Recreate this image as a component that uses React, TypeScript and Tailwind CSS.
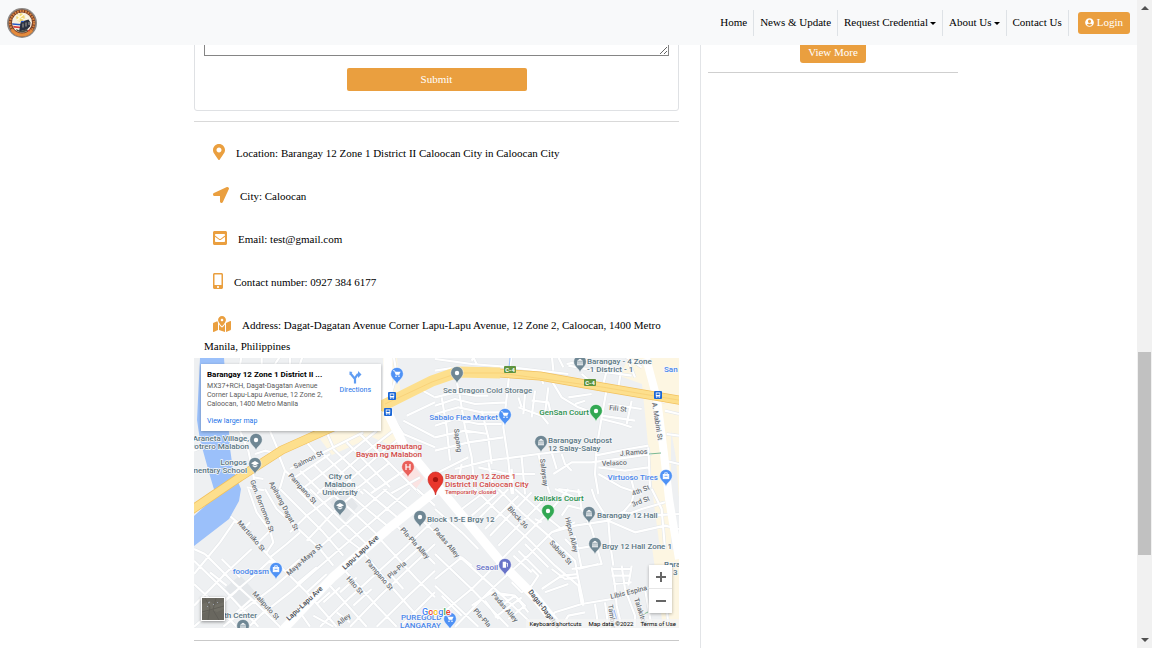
import type { ReactNode } from "react";
import {
  FaEnvelopeSquare,
  FaLocationArrow,
  FaMapMarkedAlt,
  FaMapMarkerAlt,
  FaMobileAlt,
  FaUserCircle,
} from "react-icons/fa";

const serif = "font-['Liberation_Serif',serif]";
const roboto = "font-[Roboto,sans-serif]";

function Seal() {
  return (
    <svg viewBox="0 0 30 30" className="h-[30px] w-[30px]" role="img" aria-label="Barangay seal">
      <circle cx="15" cy="15" r="15" fill="#8d8884" />
      <circle cx="15" cy="15" r="13.4" fill="#7a3f26" />
      <circle cx="15" cy="15" r="12" fill="none" stroke="#d9853f" strokeWidth="2.2" strokeDasharray="1.6 1.1" />
      <path d="M5 22a12.5 12.5 0 0 0 20 0" fill="none" stroke="#e58b3c" strokeWidth="3" />
      <circle cx="15" cy="14.6" r="10" fill="#f7f1e2" />
      <circle cx="13.500" cy="9.5" r="4.2" fill="#f3d873" />
      <path d="M12 5v8M9 7l9 5M17 6l-7 6M19 8l2 3" stroke="#fffbe6" strokeWidth="1.2" />
      <path d="M5.2 15.2l9 .8v1.500L5.600 16.700z" fill="#2456c6" />
      <path d="M6 17.700l8 1v1.500L6.800 19.700z" fill="#d83c3c" />
      <path d="M13.500 14.500l3-1.500 5-1.500 2 3-.5 4-3 3-8 2 1-5z" fill="#2a3140" />
      <path d="M9 21l5 2 6-2 1 2-6 1.600-5-1.400z" fill="#4b4d42" />
      <path d="M14 13.500h3" stroke="#2f5fd0" strokeWidth="1.200" />
      <path d="M16 15.500v4M19 14.500v4M22 14v3" stroke="#c9c3b2" strokeWidth=".8" />
      <path d="M20 22.500l3.500-1.500-1 2.500z" fill="#d8402e" />
    </svg>
  );
}

function Caret() {
  return <span className="ml-0.5 inline-block border-x-[3px] border-t-[3px] border-x-transparent border-t-black align-middle" />;
}

function NavItem({ children, menu = false }: { children: ReactNode; menu?: boolean }) {
  return (
    <li className="flex h-[26px] items-center border-r border-[#dee2e6] px-1.5">
      <a href="#" className="whitespace-nowrap">
        {children}
        {menu && <Caret />}
      </a>
    </li>
  );
}

function Detail({ icon, children }: { icon: ReactNode; children: ReactNode }) {
  return (
    <p className="px-2.5 leading-[21px]">
      <span className="mr-[11px] ml-[9px] inline-block align-middle text-[#ea9f3f]">{icon}</span>
      {children}
    </p>
  );
}

/* Street geometry, one group for each quarter of the map, at three units to the pixel. */
const northWest = [
  "M155 0L150 35M215 0V30M275 0L255 30M300 0V30M340 0L330 30",
  "M12 290L60 270M150 231L175 290L190 360L195 420M195 300L225 290L265 300M240 231L265 290",
  "M265 300L285 350L330 390L370 420M285 350L265 420M300 345L410 290L520 235",
  "M330 350L400 420M370 330L460 420M400 300L520 420M430 285L560 410M470 265L600 400M510 240L640 370L690 420",
  "M300 380L420 300M330 410L460 310L560 230M380 420L520 300L610 230M430 420L570 300L620 260M480 420L600 325M540 420L650 345M600 420L690 370",
  "M610 0L620 60L600 130M650 185L735 145M600 180L640 240L735 280M640 200L735 250M680 100L735 130",
  "M190 370L220 375M170 400L230 410M410 235L430 280M350 265L380 300",
];
const northEast = [
  "M0 15L110 30L230 40L400 60M230 0L225 40L215 130L205 220L220 320L230 420M110 0L125 30",
  "M350 0L355 50M365 0L385 40M395 30L420 25M400 35L480 50L590 65M440 60L480 95M520 30L505 90M580 20L600 70M460 0L455 30M560 40L550 100",
  "M60 60L75 130L90 220L110 310L120 420M0 155L60 135L120 150L215 145M0 180L70 160L140 175L200 175",
  "M0 130L60 115L120 125L160 125M0 215L60 195L130 210L200 210M0 250L90 230L160 240M0 290L100 265L205 250",
  "M20 130L35 220L45 320M140 170L160 250L170 330M250 130L260 160M270 120L265 180M300 110L290 190M340 100L330 180",
  "M350 80L380 130L430 160L500 185L600 200M320 75L325 90M400 130L470 120M420 150L450 140M515 105L500 190L485 280L480 360L490 420",
  "M290 140L340 145L350 190M250 160L320 185L340 210M60 345L160 320L310 300L480 280M100 310L0 360M310 300L325 360L345 420",
  "M355 360L410 325L470 325L580 310L650 300M480 305L580 285L640 275M490 340L570 350L640 340M490 360L560 400L620 420",
  "M380 300L390 330L410 350M350 295L365 345M130 340L220 360L300 360M80 330L70 380M160 325L180 420M230 345L235 420M260 310L270 420",
  "M520 150L620 165M500 195L560 210L590 220M590 140L575 210M690 170L732 180M695 240L732 245M585 360L600 420M640 280L645 400M690 320L732 330",
  "M120 0L110 20M0 50L50 42M610 120L690 145M560 0L620 40",
];
const southWest = [
  "M95 60L160 115L240 205L300 260L350 310L440 413M12 255L90 160L135 95M45 195L130 280L185 330L270 413",
  "M12 215L110 310L205 413M12 285L60 330L140 413M12 180L45 195M12 350L110 250L185 180M12 413L180 270L240 215L270 230",
  "M100 413L170 355L250 295L400 165L490 85L590 0M210 380L300 310L380 240L520 120L660 0M160 120L180 100",
  "M175 0L200 70L240 125L250 160L230 190M225 0L260 60L320 115L390 180L430 230M270 0L330 60L400 130L460 200",
  "M320 0L400 80L470 150L510 180M360 0L430 70L540 175M410 0L480 60L570 145M460 0L530 60L610 125M520 0L580 50L640 100M580 0L680 80",
  "M240 205L290 165L330 130M200 165L240 125M285 250L330 210M320 285L380 235M350 310L410 255M380 345L420 310",
  "M300 130L350 80L430 20M350 155L440 60L510 0M110 290L60 250M150 265L95 210M140 305L90 350M185 330L140 370M220 370L180 410",
  "M520 190L610 300L710 413M460 240L560 350L620 413M420 290L530 413M570 150L680 270L735 325M620 110L700 190L735 225M660 60L735 130",
  "M390 413L480 325L640 180L735 90M480 413L570 320L735 165M560 413L650 325L735 245M630 413L735 310M400 340L450 295M370 380L430 413",
  "M450 310L500 265M490 350L545 300M680 0L735 50M440 370L480 400M640 220L690 175M600 255L640 300M330 370L360 413",
];
const southEast = [
  "M0 130L60 190L170 290L300 413M0 195L110 300L220 413M0 290L130 413M0 60L80 130L130 180",
  "M0 390L110 300L210 200L350 60L400 0M60 413L170 300L280 200L350 130L420 100M0 270L80 205L110 230",
  "M120 0L180 60L280 150L360 230L430 290L445 350M190 0L260 70L340 140L420 215L430 270L445 340M240 0L330 80L380 120",
  "M130 90L220 0M150 120L250 20M165 140L290 10M190 170L330 30M60 20L90 0M80 60L160 0M110 80L190 10M235 200L290 250M250 185L320 255M270 165L340 235",
  "M110 350L170 310L240 320L280 370M200 350L240 320L270 350L220 390M180 385L260 325M20 320L80 380M150 335L190 390M230 280L260 310L290 290L310 260L290 240",
  "M320 300L380 260L430 255M330 310L400 285M350 240L390 270L430 265M410 240L500 225L490 190L470 120L440 60L430 0M430 240L490 225",
  "M350 130L420 110L520 95L600 130L690 110L732 120M520 95L480 30L470 0M520 95L560 70L640 80L732 75M540 90L620 60L690 40",
  "M320 413L360 370L440 345L530 330L650 295M530 235L540 290L545 350L560 413M560 230L570 300L600 380L600 413M590 230L580 290M530 240H590M530 260H585M535 285L590 280",
  "M520 95L525 160L535 230M600 0L590 40L560 75M650 0L680 60L690 180M360 0L430 30M370 0L440 10M420 180L480 170M420 140L440 240M390 150L410 170M440 345L430 290",
  "M380 413L400 380L450 370M480 345L490 413M510 340L520 413M630 300L650 413M690 290L700 413M300 90L320 100M380 80L400 50L440 60",
];

type Pt = { x: number; y: number; color: string; glyph?: string };
const pins: Pt[] = [
  { x: 397, y: 375, color: "#4f92f5", glyph: "cart" },
  { x: 457, y: 374, color: "#6f8794" },
  { x: 505, y: 416, color: "#4f92f5", glyph: "cart" },
  { x: 596, y: 412, color: "#32a853" },
  { x: 580, y: 363, color: "#6f8794", glyph: "hall" },
  { x: 541, y: 443, color: "#6f8794", glyph: "hall" },
  { x: 666, y: 477, color: "#4f92f5", glyph: "bag" },
  { x: 256, y: 441, color: "#6f8794" },
  { x: 255, y: 465, color: "#6f8794", glyph: "cap" },
  { x: 340, y: 507, color: "#6f8794", glyph: "cap" },
  { x: 408, y: 468, color: "#e9605a", glyph: "H" },
  { x: 420, y: 518, color: "#6f8794" },
  { x: 548, y: 512, color: "#32a853" },
  { x: 589, y: 514, color: "#6f8794", glyph: "hall" },
  { x: 595, y: 545, color: "#6f8794", glyph: "hall" },
  { x: 505, y: 566, color: "#6873c8", glyph: "fuel" },
  { x: 276, y: 570, color: "#4f92f5", glyph: "bag" },
  { x: 450, y: 620, color: "#4f92f5", glyph: "cart" },
  { x: 243, y: 627, color: "#6f8794", glyph: "hall" },
];

function Pin({ x, y, color, glyph }: Pt) {
  return (
    <g transform={`translate(${x} ${y})`}>
      <path d="M0 10.5C-.8 6.5-6.3 4.5-6.3-.3a6.3 6.3 0 0 1 12.6 0C6.3 4.5.8 6.5 0 10.5z" fill={color} stroke="#fff" strokeWidth=".5" />
      {!glyph && <circle r="2.2" fill="#fff" />}
      {glyph === "cart" && (
        <g fill="#fff">
          <path d="M-4-3.300h1.500l1.700 4H2.300" fill="none" stroke="#fff" strokeWidth=".8" />
          <path d="M-2.200-2.300H3.600L2.300.400h-3.400z" />
          <circle cx="-1" cy="2.3" r=".8" />
          <circle cx="2" cy="2.3" r=".8" />
        </g>
      )}
      {glyph === "hall" && <path d="M-3-1.3L0-3.3l3 2zM-2.6-.7h1.2V2h-1.2zM-.6-.7H.6V2H-.6zM1.4-.7h1.2V2H1.4zM-3 2.3h6v.9h-6z" fill="#fff" />}
      {glyph === "cap" && <path d="M-4-.8L0-3l4 2.2L0 1.4zM-2.3 1L0 2.2 2.3 1v1.3L0 3.4-2.3 2.3z" fill="#fff" />}
      {glyph === "bag" && (
        <g fill="none" stroke="#fff" strokeWidth=".8">
          <rect x="-2.8" y="-1.6" width="5.6" height="4.3" fill="#fff" />
          <path d="M-1.3-1.6v-1.6h2.6v1.6" />
          <path d="M-1.5.3h3" stroke={color} />
        </g>
      )}
      {glyph === "fuel" && <path d="M-2.3-3.2h3.4v6h-3.4zM1.8-2.4l1.2 1v3.2H2.2v-2.6l-.8-.6z" fill="#fff" />}
      {glyph === "H" && <path d="M-2-3v6M2-3v6M-2 0h4" stroke="#fff" strokeWidth="1.2" />}
    </g>
  );
}

type Label = { x: number; y: number; t: string; c?: string; a?: "start" | "middle" | "end"; r?: number; s?: number };
const slate = "#5a7683";
const blue = "#4a86ea";
const street = "#6a6f74";
const red = "#d24a47";
const green = "#2c9150";
const labels: Label[] = [
  { x: 587, y: 365, t: "Barangay - 4 Zone", c: slate },
  { x: 587, y: 373, t: "-1 District - 1", c: slate },
  { x: 664, y: 373, t: "San", c: blue },
  { x: 443, y: 394, t: "Sea Dragon Cold Storage", c: "#667d88" },
  { x: 498, y: 421, t: "Sabalo Flea Market", c: blue, a: "end" },
  { x: 589, y: 416, t: "GenSan Court", c: green, a: "end" },
  { x: 548, y: 444, t: "Barangay Outpost", c: slate },
  { x: 548, y: 452, t: "12 Salay-Salay", c: slate },
  { x: 658, y: 481, t: "Virtuoso Tires", c: blue, a: "end" },
  { x: 249, y: 442, t: "Araneta Village,", c: slate, a: "end" },
  { x: 249, y: 450, t: "Potrero Malabon", c: slate, a: "end" },
  { x: 247, y: 466, t: "Longos", c: slate, a: "end" },
  { x: 247, y: 474, t: "Elementary School", c: slate, a: "end" },
  { x: 422, y: 450, t: "Pagamutang", c: red, a: "end" },
  { x: 422, y: 458, t: "Bayan ng Malabon", c: red, a: "end" },
  { x: 340, y: 480, t: "City of", c: slate, a: "middle" },
  { x: 340, y: 488, t: "Malabon", c: slate, a: "middle" },
  { x: 340, y: 496, t: "University", c: slate, a: "middle" },
  { x: 445, y: 480, t: "Barangay 12 Zone 1", c: red },
  { x: 445, y: 488, t: "District II Caloocan City", c: red },
  { x: 445, y: 495, t: "Temporarily closed", c: red, s: 6 },
  { x: 427, y: 523, t: "Block 15-E Brgy 12", c: slate },
  { x: 534, y: 502, t: "Kaliskis Court", c: green },
  { x: 597, y: 519, t: "Barangay 12 Hall", c: slate },
  { x: 602, y: 550, t: "Brgy 12 Hall Zone 1", c: slate },
  { x: 664, y: 568, t: "Bara", c: slate },
  { x: 673, y: 576, t: "3", c: slate },
  { x: 498, y: 571, t: "Seaoil", c: "#6873c8", a: "end" },
  { x: 269, y: 575, t: "foodgasm", c: blue, a: "end" },
  { x: 257, y: 619, t: "Health Center", c: slate, a: "end" },
  { x: 401, y: 621, t: "PUREGOLD", c: blue },
  { x: 400, y: 629, t: "LANGARAY", c: blue },
  { x: 609, y: 411, t: "Fili St", r: 6, s: 7 },
  { x: 620, y: 457, t: "J.Ramos", r: -5, s: 7 },
  { x: 602, y: 467, t: "Velasco", r: -3, s: 7 },
  { x: 652, y: 404, t: "A. Mabini St", r: 81, s: 7 },
  { x: 454, y: 430, t: "Sapang", r: 82, s: 7 },
  { x: 540, y: 460, t: "Salaysay", r: 83, s: 7 },
  { x: 295, y: 470, t: "Salmon St", r: -27, s: 7 },
  { x: 288, y: 477, t: "Pampano St", r: 48, s: 7 },
  { x: 269, y: 484, t: "Apihang Dagat St", r: 62, s: 7 },
  { x: 250, y: 482, t: "Gen. Borromeo St", r: 69, s: 7 },
  { x: 237, y: 524, t: "Martiniko St", r: 49, s: 7 },
  { x: 289, y: 577, t: "Maya-Maya St", r: -41, s: 7 },
  { x: 252, y: 595, t: "Maliputo St", r: 47, s: 7 },
  { x: 345, y: 571, t: "Lapu-Lapu Ave", r: -43, s: 7, c: "#3f464b" },
  { x: 289, y: 622, t: "Lapu-Lapu Ave", r: -43, s: 7, c: "#3f464b" },
  { x: 365, y: 563, t: "Pampano St", r: 49, s: 7 },
  { x: 346, y: 580, t: "Hito St", r: 48, s: 7 },
  { x: 390, y: 580, t: "Pla-Pla", r: -41, s: 7 },
  { x: 400, y: 531, t: "Pla-Pla Alley", r: 48, s: 7 },
  { x: 339, y: 627, t: "Alley", r: -38, s: 7 },
  { x: 433, y: 531, t: "Padas Alley", r: 50, s: 7 },
  { x: 507, y: 510, t: "Block 36", r: 48, s: 7 },
  { x: 565, y: 519, t: "Hipon Alley", r: 76, s: 7 },
  { x: 549, y: 544, t: "Sabalo St", r: 48, s: 7 },
  { x: 491, y: 596, t: "Padas Alley", r: 49, s: 7 },
  { x: 473, y: 612, t: "Pla-Pla", r: 48, s: 7 },
  { x: 528, y: 593, t: "Dagat-Dagatan", r: 52, s: 7, c: "#3f464b" },
  { x: 633, y: 497, t: "4th St", r: -22, s: 7 },
  { x: 633, y: 508, t: "3rd St", r: -22, s: 7 },
  { x: 611, y: 600, t: "Libis Espina", r: -14, s: 7 },
  { x: 608, y: 606, t: "Tamban", r: 82, s: 7 },
  { x: 634, y: 600, t: "Talakitok", r: 72, s: 7 },
];

function Streets({ d, at }: { d: string[]; at: string }) {
  return (
    <g transform={at} fill="none" strokeLinejoin="round">
      <path d={d.join("")} stroke="#e3e6e9" strokeWidth="9.5" />
      <path d={d.join("")} stroke="#fff" strokeWidth="6.5" />
    </g>
  );
}

function Bus({ x, y }: { x: number; y: number }) {
  return (
    <g transform={`translate(${x} ${y})`}>
      <rect x="-4" y="-4" width="8" height="8" rx="1" fill="#1a66d6" />
      <path d="M-2.2-2.4h4.4v4h-4.4zM-1.8 1.8h1.1v1h-1.1zM.7 1.8h1.1v1H.7z" fill="#fff" />
      <path d="M-1.5-1.6h3V0h-3z" fill="#1a66d6" />
    </g>
  );
}

function Shield({ x, y }: { x: number; y: number }) {
  return (
    <g>
      <rect x={x - 6} y={y - 3} width="12" height="7" rx="1" fill="#5f9440" />
      <text x={x} y={y + 3} textAnchor="middle" fontSize="6" fontWeight="700" fill="#fff">C-4</text>
    </g>
  );
}

function MapDrawing() {
  return (
    <svg
      viewBox="194 359 485 270"
      preserveAspectRatio="xMidYMid slice"
      className={`block h-full w-full ${roboto}`}
      role="img"
      aria-label="Map of Barangay 12 Zone 1 District II Caloocan City"
    >
      <rect x="194" y="359" width="485" height="270" fill="#eef0f2" />
      <path d="M628 359h30l18 100 3 40v-140M628 359l-8 18 22 8 12 120 8 60 9 2v-210z" fill="#fdf6e2" />
      <path d="M320 440l66-30 18 24-10 14-22-10-40 18zM383 359h14l4 40-16 10zM652 548l27 4v76h-16z" fill="#fdf6e2" />
      <path d="M330 503l14-14 14 18-13 16zM224 590l16-14 18 20-16 16z" fill="#e4e7ea" />
      <path d="M400 474l10-11 14 16-9 12z" fill="#fbe3e2" />
      <Streets d={northWest} at="translate(190 355) scale(.33333)" />
      <Streets d={northEast} at="translate(435 355) scale(.33333)" />
      <Streets d={southWest} at="translate(190 490) scale(.33333)" />
      <Streets d={southEast} at="translate(435 490) scale(.33333)" />
      <path d="M200 359h24l4 60 2 30 3 22 8 19-2 12-10 18-35 27v-30l22-20-6-20-10-36-3-20z" fill="#9bc0fa" />
      <g fill="none" stroke="#fff">
        <path d="M646 359L657 400L664 455L669 500L679 560" strokeWidth="8" />
        <path d="M388 359L387 412L403 445L436 485L505 568L535 598L562 632" strokeWidth="9" />
        <path d="M280 634L333 578L388 530L438 490" strokeWidth="9" />
      </g>
      <g fill="none" strokeLinejoin="round">
        <path d="M190 512L240 478L282 451L340 425L388 404L432 382L458 373L485 373L540 377L602 388L684 402" stroke="#f2c15e" strokeWidth="9" />
        <path d="M190 512L240 478L282 451L340 425L388 404L432 382L458 373L485 373L540 377L602 388L684 402" stroke="#fddf8d" strokeWidth="7.5" />
        <path d="M380 408L432 382L458 373L500 374" stroke="#fddf8d" strokeWidth="11" />
        <path d="M385 405L432 383L458 374L500 374L602 388L684 402" stroke="#f7cd71" strokeWidth=".7" />
      </g>
      <path d="M510 359l-1 10M614 611l-2 9M614 611l3 10" stroke="#9bc0fa" strokeWidth="1" />
      <path d="M649 455l12-1M640 617l8-4" stroke="#79b893" strokeWidth="1" />
      <Shield x={510} y={370} />
      <Shield x={590} y={383} />
      <Bus x={392} y={397} />
      <Bus x={388} y={413} />
      <Bus x={658} y={396} />
      {labels.map((l) => (
        <text
          key={`${l.t}${l.x}`}
          transform={`translate(${l.x} ${l.y}) rotate(${l.r ?? 0})`}
          textAnchor={l.a ?? "start"}
          fontSize={l.s ?? 8}
          fontWeight="500"
          fill={l.c ?? street}
          stroke="#f7f8f9"
          strokeWidth="1.4"
          paintOrder="stroke"
        >
          {l.t}
        </text>
      ))}
      {pins.map((p) => (
        <Pin key={`${p.x}-${p.y}`} {...p} />
      ))}
      <path d="M435.500 496C434.500 489 428 486.500 428 480.500a7.500 7.500 0 0 1 15 0C443 486.500 436.500 489 435.500 496z" fill="#e8372c" stroke="#c5221f" strokeWidth=".6" />
      <circle cx="435.500" cy="480.500" r="2.600" fill="#a5150f" />
      <text x="422" y="616" fontSize="9" fontWeight="500" stroke="#fff" strokeWidth="1.5" paintOrder="stroke">
        <tspan fill="#4285f4">G</tspan>
        <tspan fill="#ea4335">o</tspan>
        <tspan fill="#fbbc05">o</tspan>
        <tspan fill="#4285f4">g</tspan>
        <tspan fill="#34a853">l</tspan>
        <tspan fill="#ea4335">e</tspan>
      </text>
    </svg>
  );
}

function MapPanel() {
  return (
    <section aria-label="Map" className={`relative h-[270px] overflow-hidden ${roboto}`}>
      <MapDrawing />
      <div className="absolute top-[6px] left-[7px] flex w-[180px] justify-between bg-white pt-1.5 pr-2.5 pb-[5px] pl-1.5 shadow-[0_1px_3px_rgba(0,0,0,0.3)]">
        <div className="text-[7px] leading-[9px] whitespace-nowrap text-[#5b5b5b]">
          <h2 className="mb-0.5 text-[8px] leading-[10px] font-bold text-black">Barangay 12 Zone 1 District II ...</h2>
          <p>
            MX37+RCH, Dagat-Dagatan Avenue
            <br />
            Corner Lapu-Lapu Avenue, 12 Zone 2,
            <br />
            Caloocan, 1400 Metro Manila
          </p>
          <a href="#" className="mt-2 block text-[#1a73e8]">View larger map</a>
        </div>
        <a href="#" className="flex flex-col items-center text-[7px] leading-[9px] text-[#1a73e8]">
          <svg viewBox="0 0 14 14" className="mb-0.5 h-[14px] w-[14px]" aria-hidden="true">
            <path d="M7 13.500V9L2.500 3.500M7 10V8l2.500-3.500H11" fill="none" stroke="#5f9cf2" strokeWidth="2.200" />
            <path d="M10 1l3.500 3.500L10 8z" fill="#5f9cf2" />
            <path d="M1.500 1.500l3 .5-3 3z" fill="#5f9cf2" />
          </svg>
          Directions
        </a>
      </div>
      <button
        type="button"
        aria-label="Show satellite imagery"
        className="absolute bottom-[7px] left-[7px] h-6 w-6 overflow-hidden border border-white bg-[#69675f] shadow-[0_1px_3px_rgba(0,0,0,0.4)]"
      >
        <svg viewBox="0 0 22 22" className="h-full w-full" aria-hidden="true">
          <path d="M0 6l8-3 5 4 9-3v7l-7 3-6-2-9 4z" fill="#716f66" />
          <path d="M3 0l5 9-2 13M14 0l-3 12 6 10M0 14l22-6" stroke="#605e57" strokeWidth="1" fill="none" />
          <path d="M6 5l2-1M11 6l1 1M15 5l1-1M5 8l1 1" stroke="#9da3ae" strokeWidth="1" />
        </svg>
      </button>
      <div className="absolute right-[7px] bottom-[15px] flex w-[23px] flex-col divide-y divide-[#e6e6e6] bg-white shadow-[0_1px_3px_rgba(0,0,0,0.3)]">
        <button type="button" aria-label="Zoom in" className="flex h-6 items-center justify-center">
          <svg viewBox="0 0 12 12" className="h-3 w-3" aria-hidden="true">
            <path d="M6 1v10M1 6h10" stroke="#666" strokeWidth="2" />
          </svg>
        </button>
        <button type="button" aria-label="Zoom out" className="flex h-6 items-center justify-center">
          <svg viewBox="0 0 12 12" className="h-3 w-3" aria-hidden="true">
            <path d="M1 6h10" stroke="#666" strokeWidth="2" />
          </svg>
        </button>
      </div>
      <div className="absolute right-0 bottom-0 flex gap-[7px] bg-[#f5f5f5]/70 px-[3px] text-[6px] leading-[9px] text-black">
        <button type="button">Keyboard shortcuts</button>
        <span>Map data ©2022</span>
        <a href="#">Terms of Use</a>
      </div>
    </section>
  );
}

function ScrollTrack() {
  return (
    <div aria-hidden="true" className="z-20 flex w-[15px] shrink-0 flex-col items-center justify-between bg-[#f1f1f1] py-[6px]">
      <span className="border-x-[4px] border-b-[4px] border-x-transparent border-b-[#505050]" />
      <span className="mt-[342px] mb-auto h-[203px] w-[13px] bg-[#c1c1c1]" />
      <span className="border-x-[4px] border-t-[4px] border-x-transparent border-t-[#505050]" />
    </div>
  );
}

export default function App() {
  return (
    <div className={`flex h-screen overflow-hidden bg-white text-[11px] text-black ${serif}`}>
      <div className="flex min-w-0 flex-1 flex-col">
        <header className="z-10 flex h-[45px] shrink-0 items-center justify-between bg-[#f8f9fa] pr-[7px] pl-[7px]">
          <a href="#">
            <Seal />
          </a>
          <nav className="flex items-center">
            <ul className="flex items-center">
              <NavItem>Home</NavItem>
              <NavItem>News &amp; Update</NavItem>
              <NavItem menu>Request Credential</NavItem>
              <NavItem menu>About Us</NavItem>
              <NavItem>Contact Us</NavItem>
            </ul>
            <button type="button" className="ml-[9px] flex h-[22px] items-center gap-[3px] rounded-[3px] bg-[#ea9f3f] px-[7px] text-white">
              <FaUserCircle className="h-[9px] w-[9px]" />
              Login
            </button>
          </nav>
        </header>
        <main className="flex flex-1 justify-center overflow-hidden pl-[15px]">
          <div className="flex w-full max-w-[764px]">
            <div className="min-w-0 flex-1">
              <form className="-mt-[50px] flex flex-col items-center rounded-b-[3px] border border-[#dfe1e4] px-[9px] pb-[19px]">
                <textarea aria-label="Message" className="block h-[60px] w-full resize border border-[#858585] bg-white" />
                <button type="button" className="mt-3 h-[23px] w-[180px] rounded-[2px] bg-[#ea9f3f] text-white">
                  Submit
                </button>
              </form>
              <hr className="mt-2.5 border-[#d9d9d9]" />
              <div className="flex flex-col gap-[22px] pt-[21px] pb-px">
                <Detail icon={<FaMapMarkerAlt className="h-4 w-3 -translate-y-0.5" />}>
                  Location: Barangay 12 Zone 1 District II Caloocan City in Caloocan City
                </Detail>
                <Detail icon={<FaLocationArrow className="h-4 w-4 -translate-y-0.5" />}>City: Caloocan</Detail>
                <Detail icon={<FaEnvelopeSquare className="h-4 w-3.5 -translate-y-0.5" />}>Email: test@gmail.com</Detail>
                <Detail icon={<FaMobileAlt className="h-4 w-2.5 -translate-y-0.5" />}>Contact number: 0927 384 6177</Detail>
                <Detail icon={<FaMapMarkedAlt className="h-4 w-[18px] -translate-y-0.5" />}>
                  Address: Dagat-Dagatan Avenue Corner Lapu-Lapu Avenue, 12 Zone 2, Caloocan, 1400 Metro Manila, Philippines
                </Detail>
              </div>
              <MapPanel />
              <hr className="mt-3 border-[#c9c9c9]" />
            </div>
            <aside className="ml-[21px] flex w-[258px] shrink-0 flex-col items-center border-l border-[#e2e4e7] pl-[7px]">
              <button type="button" className="-mt-1 h-[22px] shrink-0 rounded-[3px] bg-[#ea9f3f] px-2 text-white">
                View More
              </button>
              <hr className="mt-[9px] w-full border-[#cfcfcf]" />
            </aside>
          </div>
        </main>
      </div>
      <ScrollTrack />
    </div>
  );
}
